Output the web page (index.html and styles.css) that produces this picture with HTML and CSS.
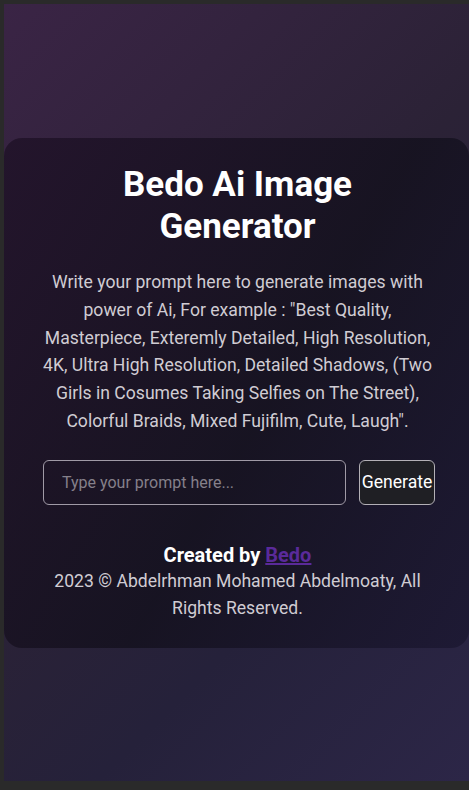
FILE: index.html
```html
<!DOCTYPE html>
<html lang="en">
<head>
<meta charset="UTF-8">
<title>Bedo Ai Image Generator</title>
<link rel="stylesheet" href="styles.css">
</head>
<body>
<main class="page">
  <section class="card">
    <h1 class="title">Bedo Ai Image Generator</h1>
    <p class="desc">Write your prompt here to generate images with power of Ai, For example : "Best Quality, Masterpiece, Exteremly Detailed, High Resolution, 4K, Ultra High Resolution, Detailed Shadows, (Two Girls in Cosumes Taking Selfies on The Street), Colorful Braids, Mixed Fujifilm, Cute, Laugh".</p>
    <form class="prompt-form">
      <input class="prompt-input" type="text" placeholder="Type your prompt here...">
      <button class="generate-btn" type="button">Generate</button>
    </form>
    <footer class="credits">
      <p class="created">Created by <a href="#" class="author">Bedo</a></p>
      <p class="rights">2023 © Abdelrhman Mohamed Abdelmoaty, All Rights Reserved.</p>
    </footer>
  </section>
</main>
</body>
</html>
```
FILE: styles.css
```css
* { box-sizing: border-box; }
html, body { margin: 0; padding: 0; }
body {
  background: #2a2a2a;
  font-family: Roboto, "Liberation Sans", sans-serif;
  height: 790px;
  overflow: hidden;
}
.page {
  margin: 4px 0 0 4px;
  height: 777px;
  background: linear-gradient(135deg, #3a2445 0%, #2b2236 45%, #25213a 70%, #2c2647 100%);
  display: flex;
  align-items: center;
  padding-top: 134px;
  flex-direction: column;
}
.card {
  width: 465px;
  height: 510px;
  border-radius: 18px;
  background: linear-gradient(120deg, rgba(32,18,40,0.85) 0%, rgba(20,17,30,0.85) 55%, rgba(28,24,50,0.85) 100%);
  padding: 26px 36px 0 38px;
  text-align: center;
  color: #fff;
}
.title {
  margin: 0;
  font-size: 35px;
  line-height: 42px;
  font-weight: 700;
  padding: 0 50px;
}
.desc {
  margin: 21px 0 0;
  font-size: 17.6px;
  line-height: 27.8px;
  color: #d0ccd3;
}
.prompt-form {
  display: flex;
  gap: 13px;
  margin-top: 24px;
  padding-left: 1px;
}
.prompt-input {
  width: 303px;
  flex: 0 0 303px;
  height: 45px;
  border: 1px solid #a09aa6;
  border-radius: 6px;
  background: transparent;
  padding: 0 18px;
  font-family: Roboto, "Liberation Sans", sans-serif;
  font-size: 16px;
  color: #fff;
  outline: none;
}
.prompt-input::placeholder { color: #85808a; }
.generate-btn {
  width: 76px;
  flex: 0 0 76px;
  height: 45px;
  border: 1px solid #b3b0b6;
  border-radius: 6px;
  background: #1f1f24;
  color: #fff;
  font-family: Roboto, "Liberation Sans", sans-serif;
  font-size: 17.6px;
  padding: 0;
  white-space: nowrap;
}
.credits { margin-top: 37px; }
.created {
  margin: 0;
  font-size: 20px;
  font-weight: 700;
  line-height: 26px;
}
.author { color: #5a2a9a; }
.rights {
  margin: 0;
  font-size: 17.6px;
  line-height: 27px;
  color: #d0ccd3;
}
```
